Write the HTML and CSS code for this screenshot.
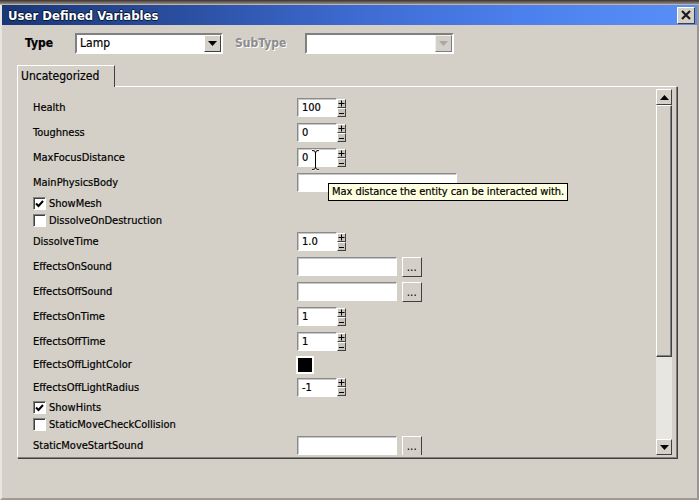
FILE: index.html
```html
<!DOCTYPE html>
<html>
<head>
<meta charset="utf-8">
<link rel="stylesheet" href="styles.css">
</head>
<body>
<div class="window">
  <div class="topstrip"></div>
  <div class="titlebar">
    <span class="title">User Defined Variables</span>
    <span class="close"><svg width="10" height="10" viewBox="0 0 10 10"><path d="M1 1L9 9M9 1L1 9" stroke="#1a1a1a" stroke-width="2.2"/></svg></span>
  </div>
  <div class="typerow">
    <span class="typelabel">Type</span>
    <div class="combo">
      <span class="combo-text">Lamp</span>
      <span class="combo-btn"><svg width="9" height="5" viewBox="0 0 9 5"><path d="M0 0H9L4.5 5Z" fill="#000"/></svg></span>
    </div>
    <span class="sublabel">SubType</span>
    <div class="combo combo-wide">
      <span class="combo-text"></span>
      <span class="combo-btn disabled"><svg width="9" height="5" viewBox="0 0 9 5"><path d="M0 0H9L4.5 5Z" fill="#a8a8a8"/></svg></span>
    </div>
  </div>
  <div class="tabs">
    <div class="tab">Uncategorized</div>
  </div>
  <div class="panel">
    <div class="rows">
      <div class="row"><span class="lbl">Health</span><div class="spin"><span class="inp">100</span><span class="btns"><span class="sb"><svg width="7" height="7" viewBox="0 0 7 7"><path d="M0.5 3.5H6.5M3.5 0.5V6.5" stroke="#000" stroke-width="1"/></svg></span><span class="sb"><svg width="7" height="7" viewBox="0 0 7 7"><path d="M1 4.5H6" stroke="#000" stroke-width="1"/></svg></span></span></div></div>
      <div class="row"><span class="lbl">Toughness</span><div class="spin"><span class="inp">0</span><span class="btns"><span class="sb"><svg width="7" height="7" viewBox="0 0 7 7"><path d="M0.5 3.5H6.5M3.5 0.5V6.5" stroke="#000" stroke-width="1"/></svg></span><span class="sb"><svg width="7" height="7" viewBox="0 0 7 7"><path d="M1 4.5H6" stroke="#000" stroke-width="1"/></svg></span></span></div></div>
      <div class="row"><span class="lbl">MaxFocusDistance</span><div class="spin"><span class="inp">0</span><span class="btns"><span class="sb"><svg width="7" height="7" viewBox="0 0 7 7"><path d="M0.5 3.5H6.5M3.5 0.5V6.5" stroke="#000" stroke-width="1"/></svg></span><span class="sb"><svg width="7" height="7" viewBox="0 0 7 7"><path d="M1 4.5H6" stroke="#000" stroke-width="1"/></svg></span></span></div></div>
      <div class="row"><span class="lbl">MainPhysicsBody</span><span class="inp long"></span></div>
      <div class="row chk"><span class="box"><svg width="9" height="8" viewBox="0 0 9 8"><path d="M1 3.5L3.5 6L8 1" fill="none" stroke="#000" stroke-width="2"/></svg></span><span class="clbl">ShowMesh</span></div>
      <div class="row chk"><span class="box"></span><span class="clbl">DissolveOnDestruction</span></div>
      <div class="row"><span class="lbl">DissolveTime</span><div class="spin"><span class="inp">1.0</span><span class="btns"><span class="sb"><svg width="7" height="7" viewBox="0 0 7 7"><path d="M0.5 3.5H6.5M3.5 0.5V6.5" stroke="#000" stroke-width="1"/></svg></span><span class="sb"><svg width="7" height="7" viewBox="0 0 7 7"><path d="M1 4.5H6" stroke="#000" stroke-width="1"/></svg></span></span></div></div>
      <div class="row"><span class="lbl">EffectsOnSound</span><div class="file"><span class="inp mid"></span><span class="dots">...</span></div></div>
      <div class="row"><span class="lbl">EffectsOffSound</span><div class="file"><span class="inp mid"></span><span class="dots">...</span></div></div>
      <div class="row"><span class="lbl">EffectsOnTime</span><div class="spin"><span class="inp">1</span><span class="btns"><span class="sb"><svg width="7" height="7" viewBox="0 0 7 7"><path d="M0.5 3.5H6.5M3.5 0.5V6.5" stroke="#000" stroke-width="1"/></svg></span><span class="sb"><svg width="7" height="7" viewBox="0 0 7 7"><path d="M1 4.5H6" stroke="#000" stroke-width="1"/></svg></span></span></div></div>
      <div class="row"><span class="lbl">EffectsOffTime</span><div class="spin"><span class="inp">1</span><span class="btns"><span class="sb"><svg width="7" height="7" viewBox="0 0 7 7"><path d="M0.5 3.5H6.5M3.5 0.5V6.5" stroke="#000" stroke-width="1"/></svg></span><span class="sb"><svg width="7" height="7" viewBox="0 0 7 7"><path d="M1 4.5H6" stroke="#000" stroke-width="1"/></svg></span></span></div></div>
      <div class="row colorrow"><span class="lbl">EffectsOffLightColor</span><span class="swatch"></span></div>
      <div class="row radrow"><span class="lbl">EffectsOffLightRadius</span><div class="spin"><span class="inp">-1</span><span class="btns"><span class="sb"><svg width="7" height="7" viewBox="0 0 7 7"><path d="M0.5 3.5H6.5M3.5 0.5V6.5" stroke="#000" stroke-width="1"/></svg></span><span class="sb"><svg width="7" height="7" viewBox="0 0 7 7"><path d="M1 4.5H6" stroke="#000" stroke-width="1"/></svg></span></span></div></div>
      <div class="row chk"><span class="box"><svg width="9" height="8" viewBox="0 0 9 8"><path d="M1 3.5L3.5 6L8 1" fill="none" stroke="#000" stroke-width="2"/></svg></span><span class="clbl">ShowHints</span></div>
      <div class="row chk"><span class="box"></span><span class="clbl">StaticMoveCheckCollision</span></div>
      <div class="row"><span class="lbl">StaticMoveStartSound</span><div class="file"><span class="inp mid"></span><span class="dots">...</span></div></div>
    </div>
    <div class="scrollbar">
      <span class="sbtn"><svg width="9" height="5" viewBox="0 0 9 5"><path d="M0 5H9L4.5 0Z" fill="#000"/></svg></span>
      <span class="thumb"></span>
      <span class="track"></span>
      <span class="sbtn"><svg width="9" height="5" viewBox="0 0 9 5"><path d="M0 0H9L4.5 5Z" fill="#000"/></svg></span>
    </div>
  </div>
  <div class="tooltip">Max distance the entity can be interacted with.</div>
  <svg class="ibeam" width="9" height="22" viewBox="0 0 9 22"><path d="M1 1.5Q4.5 1 4.5 4V18Q4.5 21 1 20.5M8 1.5Q4.5 1 4.5 4V18Q4.5 21 8 20.5" fill="none" stroke="#fff" stroke-width="2.2"/><path d="M1 1.5Q4.5 1 4.5 4V18Q4.5 21 1 20.5M8 1.5Q4.5 1 4.5 4V18Q4.5 21 8 20.5" fill="none" stroke="#000" stroke-width="1"/></svg>
</div>
</body>
</html>
```

FILE: styles.css
```css
* { box-sizing: border-box; }
html, body { margin: 0; padding: 0; }
body {
  width: 699px;
  height: 500px;
  overflow: hidden;
  background: #d4d0c8;
  font-family: "DejaVu Sans Condensed", "DejaVu Sans", sans-serif;
  font-stretch: condensed;
  font-size: 11px;
  color: #000;
}
.window {
  position: relative;
  width: 699px;
  height: 500px;
  background: #d4d0c8;
  border-left: 2px solid #e8e6e0;
  border-right: 2px solid #9a968e;
  border-bottom: 2px solid #a09c94;
  display: flex;
  flex-direction: column;
  -webkit-text-stroke: 0.2px #000;
}
.topstrip {
  height: 5px;
  background: linear-gradient(#3a3330, #8a8078 70%, #d4d0c8);
  margin-left: -2px;
  margin-right: -2px;
}
.titlebar {
  height: 20px;
  background: linear-gradient(90deg, #1a3675 0%, #2a4e9e 25%, #3d6ad0 50%, #4c80ec 75%, #5a8ef7 100%);
  display: flex;
  align-items: center;
  justify-content: space-between;
  padding: 0 2px 0 6px;
}
.title {
  color: #fff;
  font-weight: bold;
  font-size: 13px;
  -webkit-text-stroke: 0;
  text-shadow: -1px 0 #0a1a3a, 1px 0 #0a1a3a, 0 -1px #0a1a3a, 0 1px #0a1a3a;
}
.close {
  width: 18px;
  height: 17px;
  background: #d4d0c8;
  border: 1px solid;
  border-color: #fff #404040 #404040 #fff;
  display: flex;
  align-items: center;
  justify-content: center;
}
.typerow {
  display: flex;
  align-items: center;
  height: 26px;
  margin-top: 5px;
  padding-left: 23px;
}
.typelabel {
  font-weight: bold;
  font-size: 12px;
  width: 50px;
}
.combo {
  width: 148px;
  height: 21px;
  background: #fff;
  border: 2px solid;
  border-color: #808080 #fff #fff #808080;
  display: flex;
  align-items: center;
  justify-content: space-between;
}
.combo-wide { width: 149px; }
.combo-text { padding-left: 3px; font-size: 12px; }
.combo-btn {
  width: 17px;
  height: 17px;
  background: #d4d0c8;
  border: 1px solid;
  border-color: #fff #404040 #404040 #fff;
  display: flex;
  align-items: center;
  justify-content: center;
}
.combo-btn.disabled { border-color: #f0f0f0 #808080 #808080 #f0f0f0; }
.sublabel {
  color: #8c8c8c;
  -webkit-text-stroke: 0;
  font-size: 12px;
  font-weight: bold;
  width: 82px;
  padding-left: 12px;
  text-shadow: 1px 1px #fff;
}
.tabs {
  margin-top: 9px;
  padding-left: 15px;
  display: flex;
  height: 21px;
}
.tab {
  width: 98px;
  height: 22px;
  border: 1px solid;
  border-color: #fff #404040 transparent #fff;
  border-bottom: none;
  padding: 3px 0 0 3px;
  font-size: 12px;
  background: #d4d0c8;
  position: relative;
  z-index: 1;
}
.panel {
  margin-left: 15px;
  width: 660px;
  height: 372px;
  border: 1px solid;
  border-color: #fff #808080 #808080 #fff;
  box-shadow: 1px 1px 0 #404040;
  display: flex;
  padding: 2px 4px 2px 1px;
}
.rows {
  flex: 1;
  overflow: hidden;
  padding-top: 6px;
  padding-left: 14px;
}
.row {
  display: flex;
  align-items: center;
  height: 25px;
}
.row.chk { height: 17px; }
.row.colorrow { height: 21px; }
.row.radrow { height: 24px; }
.lbl { width: 264px; flex: none; }
.spin { display: flex; align-items: center; }
.inp {
  display: flex;
  align-items: center;
  width: 40px;
  height: 19px;
  background: #fff;
  border: 1px solid;
  border-color: #8a8a8a #fff #fff #8a8a8a;
  box-shadow: inset 1px 1px 0 #c8c8c8;
  padding-left: 4px;
}
.inp.mid { width: 100px; }
.inp.long { width: 160px; }
.btns { display: flex; flex-direction: column; }
.sb {
  width: 9px;
  height: 9px;
  background: #c8c4bc;
  border: 1px solid;
  border-color: #fff #404040 #404040 #fff;
  display: flex;
  align-items: center;
  justify-content: center;
  overflow: hidden;
}
.sb svg { flex: none; }
.file { display: flex; align-items: center; }
.dots {
  margin-left: 5px;
  width: 20px;
  height: 20px;
  background: #d4d0c8;
  border: 1px solid;
  border-color: #fff #404040 #404040 #fff;
  display: flex;
  align-items: flex-end;
  justify-content: center;
  padding-bottom: 3px;
  font-size: 10px;
  letter-spacing: 0.5px;
}
.box {
  width: 13px;
  height: 13px;
  background: #fff;
  border: 1px solid;
  border-color: #808080 #fff #fff #808080;
  box-shadow: inset 1px 1px 0 #404040;
  display: flex;
  align-items: center;
  justify-content: center;
  margin-right: 3px;
}
.swatch {
  width: 18px;
  height: 18px;
  background: #000;
  border: 2px solid #fff;
  margin-left: -1px;
}
.scrollbar {
  width: 16px;
  display: flex;
  flex-direction: column;
}
.sbtn {
  width: 16px;
  height: 16px;
  background: #d4d0c8;
  border: 1px solid;
  border-color: #fff #404040 #404040 #fff;
  display: flex;
  align-items: center;
  justify-content: center;
  flex: none;
}
.thumb {
  height: 252px;
  background: #d4d0c8;
  border: 1px solid;
  border-color: #fff #404040 #404040 #fff;
  box-shadow: inset -1px -1px 0 #808080;
  flex: none;
}
.track { flex: 1; background: #e8e6e0; }
.tooltip {
  position: absolute;
  left: 326px;
  top: 183px;
  height: 18px;
  padding: 1px 3px 0 3px;
  background: #ffffe1;
  border: 1px solid #000;
  font-size: 11px;
  letter-spacing: -0.05px;
  white-space: nowrap;
}
.ibeam {
  position: absolute;
  left: 309px;
  top: 149px;
}
```
